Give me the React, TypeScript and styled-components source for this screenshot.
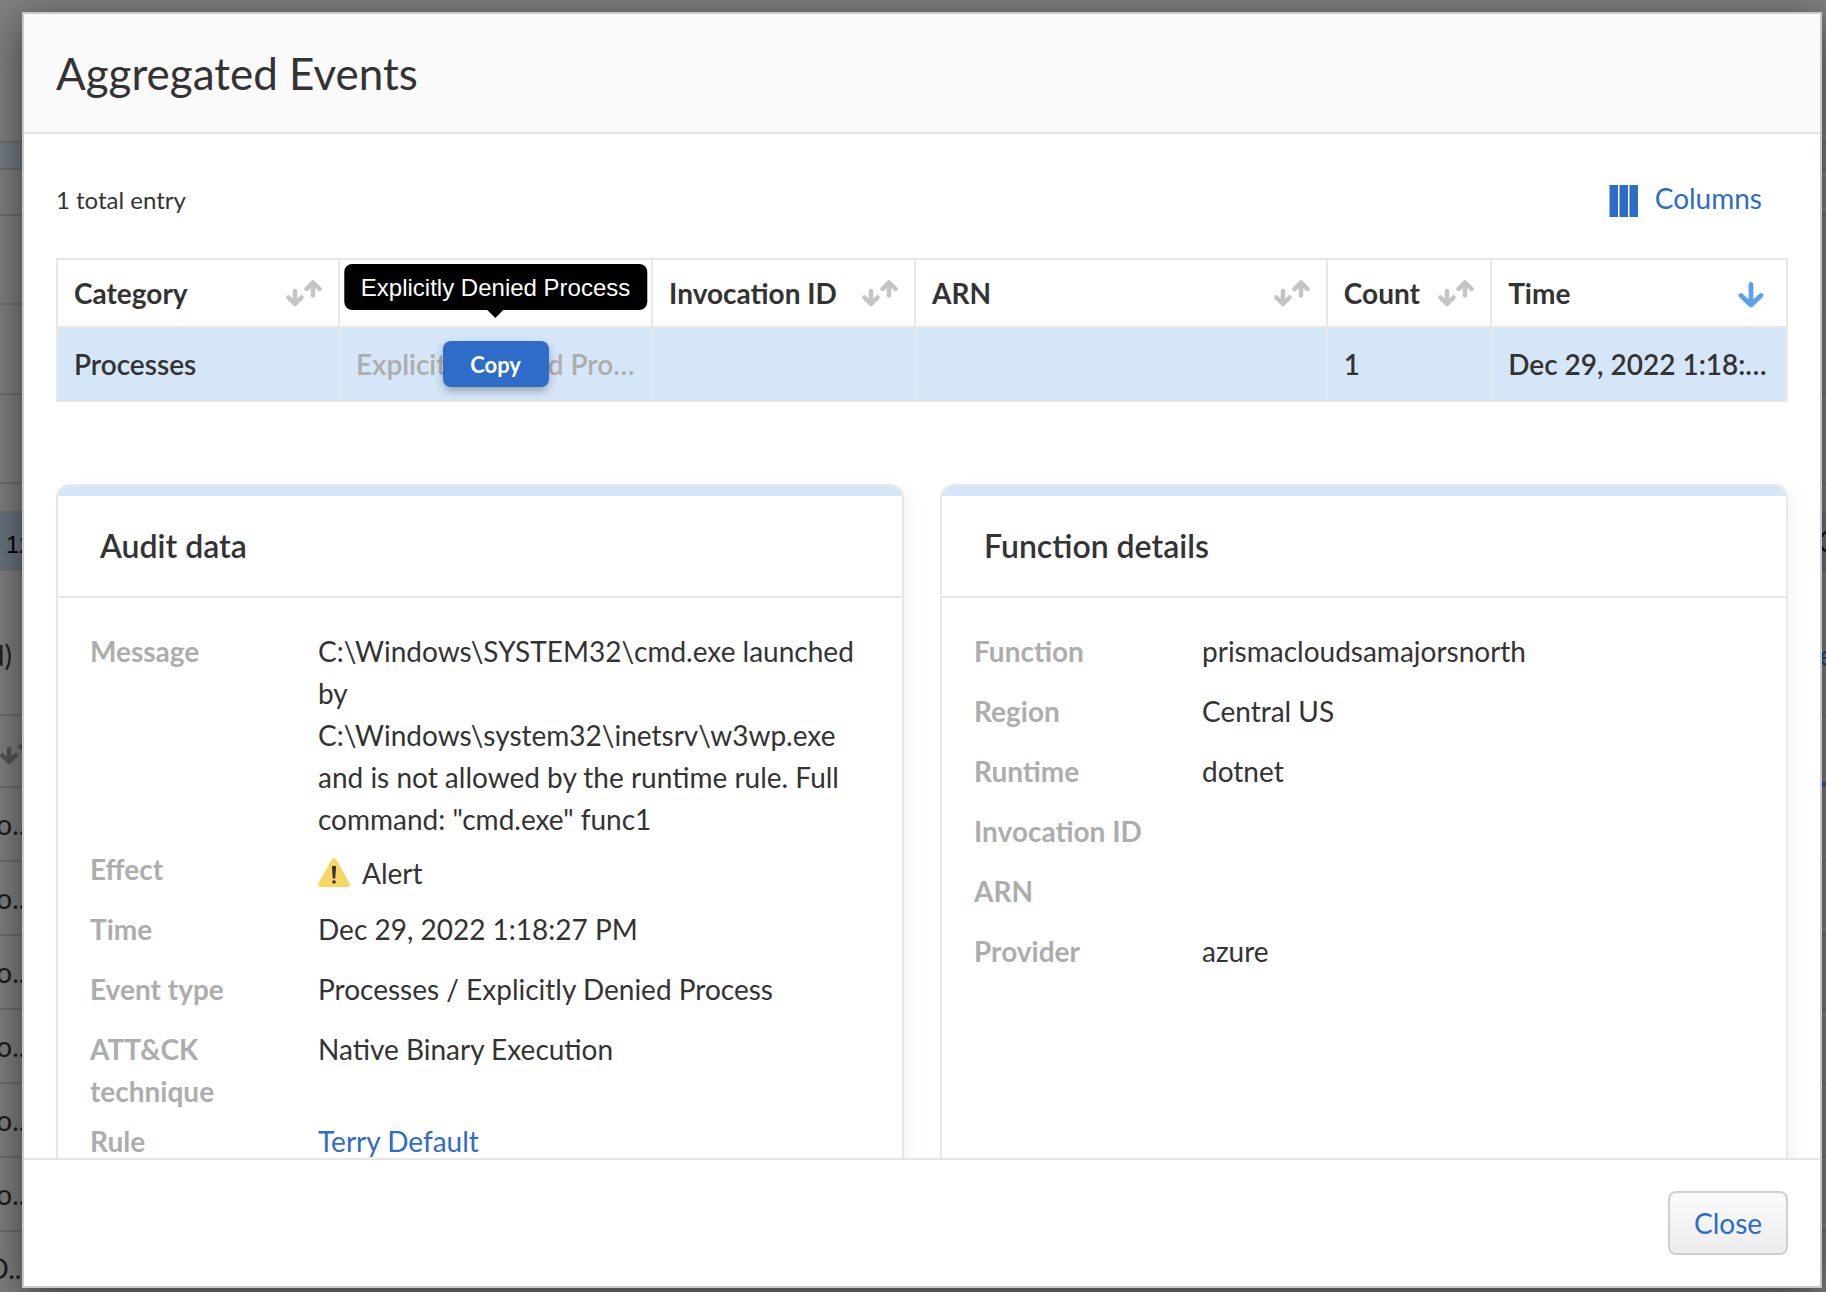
import React from 'react';
import styled, { createGlobalStyle } from 'styled-components';

const GlobalStyle = createGlobalStyle`
  * { box-sizing: border-box; }
  html, body, #root { height: 100%; margin: 0; }
  body {
    font-family: Lato, 'Liberation Sans', sans-serif;
    font-size: 28px;
    line-height: 42px;
    color: #333;
    overflow: hidden;
  }
  button { font: inherit; cursor: pointer; }
`;

const Page = styled.div`
  position: relative;
  height: 100vh;
  overflow: hidden;
  background: #808080;
`;

const Backdrop = styled.div`
  position: absolute;
  inset: 0;
  display: flex;
  flex-direction: column;
`;

const Strip = styled.div<{ $h: number; $bg?: string }>`
  flex: 0 0 ${p => p.$h}px;
  display: flex;
  justify-content: space-between;
  align-items: center;
  overflow: hidden;
  border-bottom: 2px solid #6f6f6f;
  background: ${p => p.$bg || 'transparent'};
  color: #1c1c1c;
`;

const LeftPeek = styled.div<{ $width?: number }>`
  display: flex;
  flex: none;
  justify-content: flex-end;
  width: ${p => p.$width || 32}px;
  white-space: nowrap;
`;

const Lowered = styled(LeftPeek)`
  padding-top: 24px;
`;

const RowNumber = styled.div`
  padding: 8px 0 0 6px;
  color: #000;
  font: 24px/42px 'Liberation Sans', sans-serif;
`;

const SortPeek = styled.div`
  display: flex;
`;

const RightPeek = styled.div<{ $color?: string }>`
  display: flex;
  align-self: stretch;
  align-items: center;
  width: 7px;
  white-space: nowrap;
  color: ${p => p.$color || '#111'};
`;

const LoweredRight = styled.span`
  padding-top: 24px;
`;

const ActiveMark = styled.div`
  align-self: flex-end;
  width: 8px;
  height: 4px;
  background: #2a5f97;
`;

const Modal = styled.section`
  position: absolute;
  inset: 12px 4px 4px 22px;
  display: flex;
  flex-direction: column;
  border: 2px solid #c9c9c9;
  background: #fff;
  background-clip: padding-box;
  box-shadow: 0 10px 40px rgba(0, 0, 0, 0.55);
`;

const ModalHeader = styled.header`
  flex: none;
  padding: 29px 32px;
  border-bottom: 2px solid #e5e5e5;
  background: #fafafa;
`;

const Title = styled.h1`
  margin: 0;
  font-size: 44px;
  line-height: 60px;
  font-weight: 400;
`;

const ModalBody = styled.div`
  flex: 1 1 0;
  min-height: 0;
  overflow: hidden;
  padding: 42px 32px 0;
`;

const Toolbar = styled.div`
  display: flex;
  justify-content: space-between;
  align-items: center;
  height: 48px;
`;

const Total = styled.span`
  font-size: 24px;
`;

const ColumnsButton = styled.button`
  display: flex;
  align-items: flex-end;
  gap: 16px;
  height: 34px;
  padding: 0 26px 0 0;
  border: 0;
  background: none;
  color: #2d6cc7;
  line-height: 38px;
`;

const Table = styled.table`
  width: 100%;
  margin-top: 34px;
  table-layout: fixed;
  border-collapse: collapse;
`;

const HeadCell = styled.th`
  height: 68px;
  padding: 0 16px;
  border: 2px solid #e8e8e8;
  text-align: left;
  font-weight: 700;
`;

const HeadInner = styled.div`
  display: flex;
  align-items: center;
  justify-content: space-between;
`;

const Cell = styled.td<{ $muted?: boolean }>`
  position: relative;
  height: 74px;
  padding: 0 16px;
  border: 2px solid #e8e8e8;
  background: #d6e6f9;
  font-weight: 600;
  color: ${p => (p.$muted ? '#adadad' : '#333')};
`;

const Ellipsis = styled.div`
  overflow: hidden;
  text-overflow: ellipsis;
  white-space: nowrap;
`;

const CopyLayer = styled.div`
  position: absolute;
  inset: 0;
  display: flex;
  align-items: center;
  justify-content: center;
`;

const CopyButton = styled.button`
  position: relative;
  width: 106px;
  height: 46px;
  padding: 2px 0 0;
  border: 0;
  border-radius: 8px;
  background: #2d6cc7;
  box-shadow: 0 4px 8px rgba(0, 0, 0, 0.3);
  color: #fff;
  font-size: 22px;
  font-weight: 700;
`;

const Tooltip = styled.span`
  position: absolute;
  bottom: 77px;
  left: 50%;
  transform: translateX(-50%);
  padding: 1px 17px 0;
  border-radius: 8px;
  background: #000;
  color: #fff;
  font: 24px/45px 'Liberation Sans', sans-serif;
  white-space: nowrap;
  &::after {
    content: '';
    position: absolute;
    top: 100%;
    left: 50%;
    margin-left: -8px;
    border: 8px solid transparent;
    border-top-color: #000;
    border-bottom: 0;
  }
`;

const Cards = styled.div`
  display: grid;
  grid-template-columns: 1fr 1fr;
  gap: 36px;
  margin-top: 82px;
`;

const Card = styled.section`
  overflow: hidden;
  min-height: 760px;
  border: 2px solid #e8e8e8;
  border-radius: 14px;
  background: #fff;
  box-shadow: 8px 4px 16px rgba(0, 0, 0, 0.04);
`;

const CardTitle = styled.h2`
  margin: 0;
  padding: 29px 42px;
  border-top: 10px solid #d6e6f9;
  border-bottom: 2px solid #e8e8e8;
  font-size: 32px;
  font-weight: 600;
`;

const Details = styled.dl`
  display: grid;
  grid-template-columns: 196px 1fr;
  column-gap: 32px;
  margin: 0;
  padding: 32px;
`;

const Term = styled.dt`
  font-weight: 700;
  color: #adadad;
`;

const Value = styled.dd`
  margin: 0;
`;

const Entry = styled.div<{ $tall?: boolean }>`
  display: contents;
  & > * { padding-bottom: ${p => (p.$tall ? 8 : 18)}px; }
`;

const Effect = styled.span`
  display: flex;
  align-items: center;
  gap: 12px;
  padding-top: 4px;
  margin-bottom: -4px;
`;

const RuleLink = styled.a`
  color: #2d6cc7;
  text-decoration: none;
`;

const ModalFooter = styled.footer`
  flex: none;
  display: flex;
  justify-content: flex-end;
  padding: 31px 32px;
  border-top: 2px solid #e5e5e5;
  background: #fff;
`;

const CloseButton = styled.button`
  width: 120px;
  height: 64px;
  padding: 0;
  border: 2px solid #cfcfcf;
  border-radius: 8px;
  background: linear-gradient(#fafafa, #ededed);
  color: #2d6cc7;
`;

const SortIcon = ({ color = '#c4c4c4' }: { color?: string }) => (
  <svg width="36" height="30" viewBox="0 0 36 30" fill="none" stroke={color} strokeWidth="4.500" strokeLinecap="round" strokeLinejoin="round" aria-hidden="true">
    <path d="M9 13V26M2.500 19.500L9 26L15.500 19.500" />
    <path d="M27 17.500V4.500M20.500 11L27 4.500L33.500 11" />
  </svg>
);

const DownIcon = () => (
  <svg width="32" height="30" viewBox="0 0 32 30" fill="none" stroke="#5aa2ea" strokeWidth="4.800" strokeLinecap="round" strokeLinejoin="round" aria-hidden="true">
    <path d="M13 6.500V27M3 17.500L13 27L23 17.500" />
  </svg>
);

const ColumnsIcon = () => (
  <svg width="30" height="32" viewBox="0 0 30 32" fill="#2d6cc7" aria-hidden="true">
    <path d="M.5 0h8.500v32H.5zM10.500 0h8.500v32h-8.500zM20.500 0h8.500v32h-8.500z" />
  </svg>
);

const WarningIcon = () => (
  <svg width="32" height="30" viewBox="0 0 32 30" aria-hidden="true">
    <path d="M13.300 2.200Q16-1.500 18.700 2.200L31.600 25.500Q32.800 29 29.500 29H2.500Q-.8 29 .4 25.500Z" fill="#f8d663" />
    <path d="M13.900 8.500Q16 7 18.100 8.500L17.200 20.500H14.800Z" fill="#333" />
    <circle cx="16" cy="24" r="1.800" fill="#333" />
  </svg>
);

type Column = { name: string; width?: string; sort: 'both' | 'down' };

const columns: Column[] = [
  { name: 'Category', width: '16.300%', sort: 'both' },
  { name: 'Type', width: '18.100%', sort: 'both' },
  { name: 'Invocation ID', width: '15.200%', sort: 'both' },
  { name: 'ARN', sort: 'both' },
  { name: 'Count', width: '9.500%', sort: 'both' },
  { name: 'Time', width: '17.100%', sort: 'down' },
];

const audit: { term: string; value: React.ReactNode; tall?: boolean }[] = [
  {
    term: 'Message',
    tall: true,
    value:
      'C:\\Windows\\SYSTEM32\\cmd.exe launched by C:\\Windows\\system32\\inetsrv\\w3wp.exe and is not allowed by the runtime rule. Full command: "cmd.exe" func1',
  },
  { term: 'Effect', value: <Effect><WarningIcon />Alert</Effect> },
  { term: 'Time', value: 'Dec 29, 2022 1:18:27 PM' },
  { term: 'Event type', value: 'Processes / Explicitly Denied Process' },
  { term: 'ATT&CK technique', value: 'Native Binary Execution', tall: true },
  { term: 'Rule', value: <RuleLink href="#rule">Terry Default</RuleLink> },
];

const details = [
  { term: 'Function', value: 'prismacloudsamajorsnorth' },
  { term: 'Region', value: 'Central US' },
  { term: 'Runtime', value: 'dotnet' },
  { term: 'Invocation ID', value: '' },
  { term: 'ARN', value: '' },
  { term: 'Provider', value: 'azure' },
];

type StripData = { h: number; bg?: string; left?: React.ReactNode; right?: React.ReactNode; rightColor?: string };

const strips: StripData[] = [
  { h: 143 },
  { h: 27, bg: '#747d85' },
  { h: 46 },
  { h: 89 },
  { h: 90 },
  { h: 89 },
  { h: 29 },
  { h: 58, bg: '#6a7581', left: <RowNumber>12</RowNumber>, right: '3' },
  { h: 145, left: <Lowered $width={12}>d)</Lowered>, right: <LoweredRight>e</LoweredRight>, rightColor: '#1c4a92' },
  { h: 72, left: <SortPeek><SortIcon color="#555" /></SortPeek>, right: <ActiveMark /> },
  ...Array.from({ length: 6 }, () => ({ h: 74, left: <LeftPeek>o...</LeftPeek> })),
  { h: 74, left: <LeftPeek $width={28}>D...</LeftPeek> },
];

export default function App() {
  return (
    <Page>
      <GlobalStyle />
      <Backdrop aria-hidden="true">
        {strips.map((s, i) => (
          <Strip key={i} $h={s.h} $bg={s.bg}>
            {s.left || <LeftPeek />}
            <RightPeek $color={s.rightColor}>{s.right}</RightPeek>
          </Strip>
        ))}
      </Backdrop>
      <Modal role="dialog" aria-labelledby="dialog-title">
        <ModalHeader>
          <Title id="dialog-title">Aggregated Events</Title>
        </ModalHeader>
        <ModalBody>
          <Toolbar>
            <Total>1 total entry</Total>
            <ColumnsButton type="button"><ColumnsIcon />Columns</ColumnsButton>
          </Toolbar>
          <Table>
            <colgroup>
              {columns.map(c => <col key={c.name} width={c.width} />)}
            </colgroup>
            <thead>
              <tr>
                {columns.map(c => (
                  <HeadCell key={c.name} scope="col">
                    <HeadInner>
                      {c.name === 'Type' ? null : c.name}
                      {c.name === 'Type' ? null : c.sort === 'down' ? <DownIcon /> : <SortIcon />}
                    </HeadInner>
                  </HeadCell>
                ))}
              </tr>
            </thead>
            <tbody>
              <tr>
                <Cell>Processes</Cell>
                <Cell $muted>
                  <Ellipsis>Explicitly Denied Process</Ellipsis>
                  <CopyLayer>
                    <CopyButton type="button">
                      Copy
                      <Tooltip role="tooltip">Explicitly Denied Process</Tooltip>
                    </CopyButton>
                  </CopyLayer>
                </Cell>
                <Cell />
                <Cell />
                <Cell>1</Cell>
                <Cell><Ellipsis>Dec 29, 2022 1:18:27 PM</Ellipsis></Cell>
              </tr>
            </tbody>
          </Table>
          <Cards>
            <Card>
              <CardTitle>Audit data</CardTitle>
              <Details>
                {audit.map(a => (
                  <Entry key={a.term} $tall={a.tall}>
                    <Term>{a.term}</Term>
                    <Value>{a.value}</Value>
                  </Entry>
                ))}
              </Details>
            </Card>
            <Card>
              <CardTitle>Function details</CardTitle>
              <Details>
                {details.map(d => (
                  <Entry key={d.term}>
                    <Term>{d.term}</Term>
                    <Value>{d.value}</Value>
                  </Entry>
                ))}
              </Details>
            </Card>
          </Cards>
        </ModalBody>
        <ModalFooter>
          <CloseButton type="button">Close</CloseButton>
        </ModalFooter>
      </Modal>
    </Page>
  );
}
